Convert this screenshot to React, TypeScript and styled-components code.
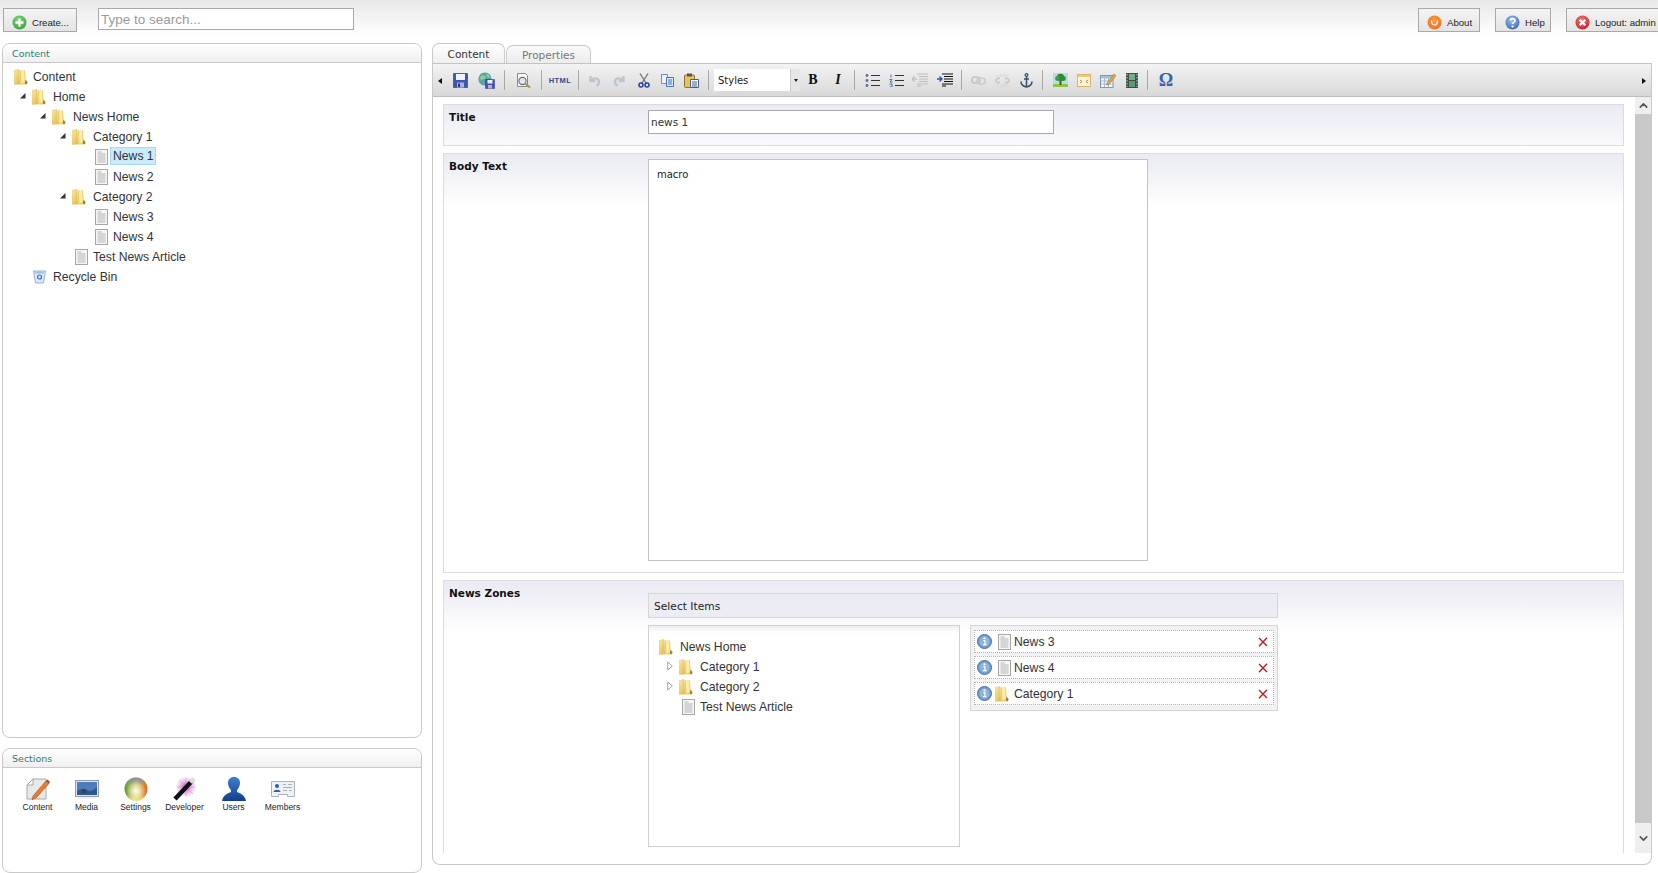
import React from 'react';
import styled, { createGlobalStyle } from 'styled-components';
import { ChevronUp, ChevronDown } from 'lucide-react';

const GlobalStyle = createGlobalStyle`
  html, body {
    margin: 0;
    padding: 0;
    background: #fff;
    overflow: hidden;
  }
  * { box-sizing: border-box; }
`;

const Page = styled.div`
  width: 1658px;
  height: 873px;
  overflow: hidden;
  display: flex;
  flex-direction: column;
  font-family: 'Liberation Sans', Arial, sans-serif;
  color: #333;
`;

const TopBar = styled.div`
  flex: none;
  height: 43px;
  padding: 8px 0 0 3px;
  display: flex;
  align-items: flex-start;
  background: linear-gradient(#e8e8e8, #fff 36px);
`;

const TopButton = styled.button<{ $w: number; $pl: number }>`
  flex: none;
  width: ${(p) => p.$w}px;
  height: 24px;
  padding: 4px 0 0 ${(p) => p.$pl}px;
  display: flex;
  align-items: center;
  gap: 5px;
  border: 1px solid #a9a9a9;
  background: linear-gradient(#f4f4f4, #e4e4e4);
  font-family: 'Liberation Sans', Arial, sans-serif;
  font-size: 9.6px;
  color: #222;
`;

const SearchInput = styled.input`
  flex: none;
  width: 256px;
  height: 22px;
  margin-left: 21px;
  padding: 0 2px;
  border: 1px solid #a9a9a9;
  background: #fff;
  font-family: 'Liberation Sans', Arial, sans-serif;
  font-size: 13.5px;
  &::placeholder { color: #9a9a9a; opacity: 1; }
`;

const TopRight = styled.div`
  margin-left: auto;
  display: flex;
  gap: 15px;
  margin-right: -6px;
`;

const Main = styled.div`
  flex: 1;
  min-height: 0;
  display: flex;
  padding-left: 2px;
`;

const LeftColumn = styled.div`
  flex: none;
  width: 420px;
  display: flex;
  flex-direction: column;
  gap: 10px;
`;

const Panel = styled.div<{ $h: number }>`
  flex: none;
  height: ${(p) => p.$h}px;
  border: 1px solid #c9c9c9;
  border-radius: 8px;
  background: #fff;
  overflow: hidden;
`;

const PanelHead = styled.div`
  height: 19px;
  padding-left: 9px;
  display: flex;
  align-items: center;
  border-bottom: 1px solid #c9c9c9;
  background: linear-gradient(#fff, #efefef);
  font-family: 'DejaVu Sans', sans-serif;
  font-size: 9.5px;
  color: #2f7d78;
`;

const Tree = styled.div<{ $pad: number; $top: number }>`
  padding: ${(p) => p.$top}px 0 0 ${(p) => p.$pad}px;
`;

const TreeRow = styled.div<{ $level: number }>`
  height: 20px;
  padding-left: ${(p) => p.$level * 20}px;
  display: flex;
  align-items: center;
  font-size: 12.2px;
`;

const ArrowSlot = styled.span`
  flex: none;
  width: 12px;
  margin: -3px 8px 0 -20px;
  display: flex;
  align-items: center;
  justify-content: flex-end;
`;

const iconShift = { folder: -2, doc: 1, bin: -1 };

const IconSlot = styled.span<{ $kind: Kind; $flush?: boolean }>`
  flex: none;
  margin-left: ${(p) => (p.$flush ? 0 : iconShift[p.$kind])}px;
  width: ${(p) => 19 - (p.$flush ? 0 : iconShift[p.$kind])}px;
  display: flex;
  align-items: center;
`;

const TreeLabel = styled.span<{ $on?: boolean }>`
  padding: 1px 1px 1px 2px;
  margin-left: -3px;
  margin-top: ${(p) => (p.$on ? -2 : 0)}px;
  border: 1px solid ${(p) => (p.$on ? '#a6d8ef' : 'transparent')};
  background: ${(p) => (p.$on ? '#cbeafa' : 'transparent')};
  line-height: 14px;
`;

const SectionGrid = styled.div`
  display: flex;
  padding: 9px 0 0 10px;
`;

const SectionItem = styled.div`
  width: 49px;
  display: flex;
  flex-direction: column;
  align-items: center;
  gap: 1px;
  font-size: 8.5px;
  color: #222;
`;

const SectionPic = styled.span`
  height: 24px;
  display: flex;
  align-items: center;
`;

const RightColumn = styled.div`
  flex: none;
  width: 1220px;
  margin-left: 10px;
  margin-bottom: 8px;
  display: flex;
  flex-direction: column;
`;

const Tabs = styled.div`
  flex: none;
  height: 20px;
  display: flex;
  align-items: flex-end;
  gap: 1px;
`;

const Tab = styled.div<{ $active?: boolean }>`
  width: ${(p) => (p.$active ? 73 : 85)}px;
  height: ${(p) => (p.$active ? 20 : 18)}px;
  padding-top: 1px;
  display: flex;
  align-items: center;
  justify-content: center;
  border: 1px solid #c9c9c9;
  border-bottom: none;
  border-radius: 7px 7px 0 0;
  background: ${(p) => (p.$active ? 'linear-gradient(#fff, #f0f0f0)' : 'linear-gradient(#fafafa, #ececec)')};
  font-family: 'DejaVu Sans', sans-serif;
  font-size: 10.5px;
  color: ${(p) => (p.$active ? '#333' : '#777')};
`;

const EditorPanel = styled.div`
  flex: 1;
  min-height: 0;
  display: flex;
  flex-direction: column;
  border: 1px solid #c9c9c9;
  border-top: none;
  border-radius: 0 0 8px 8px;
  overflow: hidden;
`;

const Toolbar = styled.div`
  flex: none;
  height: 34px;
  display: flex;
  align-items: center;
  position: relative;
  padding-left: 15px;
  border-top: 1px solid #c4c4c4;
  border-bottom: 1px solid #bdbdbd;
  background: linear-gradient(#f3f3f3, #d8d8d8);
`;

const Handle = styled.span<{ $right?: boolean }>`
  position: absolute;
  top: 14px;
  ${(p) => (p.$right ? 'right: 5px;' : 'left: 5px;')}
  width: 0;
  height: 0;
  border-top: 3px solid transparent;
  border-bottom: 3px solid transparent;
  ${(p) => (p.$right ? 'border-left: 4px solid #111;' : 'border-right: 4px solid #111;')}
`;

const Tool = styled.span<{ $w: number }>`
  flex: none;
  width: ${(p) => p.$w}px;
  height: 24px;
  display: flex;
  align-items: center;
  justify-content: center;
`;

const ToolSep = styled.span`
  flex: none;
  width: 1px;
  height: 20px;
  margin: 0 4px;
  background: #a8a8a8;
`;

const HtmlGlyph = styled.span`
  font-size: 7.5px;
  font-weight: bold;
  letter-spacing: 0.4px;
  color: #2d4f86;
`;

const SerifGlyph = styled.span<{ $italic?: boolean; $size?: number; $color?: string }>`
  font-family: 'Liberation Serif', serif;
  font-weight: bold;
  font-style: ${(p) => (p.$italic ? 'italic' : 'normal')};
  font-size: ${(p) => p.$size ?? 14}px;
  color: ${(p) => p.$color ?? '#111'};
`;

const StyleSelect = styled.div`
  flex: none;
  width: 86px;
  height: 22px;
  margin-left: 1px;
  padding-left: 4px;
  display: flex;
  align-items: center;
  justify-content: space-between;
  background: #fff;
  font-family: 'DejaVu Sans', sans-serif;
  font-size: 10px;
  color: #222;
`;

const SelectButton = styled.span`
  width: 10px;
  height: 22px;
  display: flex;
  align-items: center;
  justify-content: center;
  background: #e6e6e6;
  border-left: 1px solid #ccc;
  &::after {
    content: '';
    border-left: 2.5px solid transparent;
    border-right: 2.5px solid transparent;
    border-top: 3px solid #222;
  }
`;

const EditorBody = styled.div`
  flex: none;
  height: 756px;
  display: flex;
  overflow: hidden;
`;

const Rows = styled.div`
  flex: none;
  width: 1202px;
  padding: 7px 11px 0 10px;
  display: flex;
  flex-direction: column;
  gap: 7px;
`;

const PropertyRow = styled.div<{ $h: number }>`
  flex: none;
  height: ${(p) => p.$h}px;
  display: flex;
  align-items: flex-start;
  padding-top: 5px;
  border: 1px solid #dcdcdc;
  background: linear-gradient(#e9eaf3, #fff) no-repeat;
  background-size: 100% 52px;
`;

const PropertyLabel = styled.div`
  flex: none;
  width: 204px;
  padding-left: 5px;
  font-family: 'DejaVu Sans', sans-serif;
  font-size: 10.5px;
  font-weight: bold;
  color: #111;
  line-height: 14px;
`;

const TitleInput = styled.input`
  width: 406px;
  height: 24px;
  padding: 0 2px;
  border: 1px solid #a9a9b0;
  background: #fff;
  font-family: 'DejaVu Sans', sans-serif;
  font-size: 10.5px;
  color: #333;
`;

const RichText = styled.div`
  width: 500px;
  height: 402px;
  padding: 9px 8px;
  border: 1px solid #c4c4c8;
  background: #fff;
  font-family: 'DejaVu Sans', sans-serif;
  font-size: 10px;
  color: #222;
`;

const Picker = styled.div`
  width: 630px;
  padding-top: 7px;
  display: flex;
  flex-direction: column;
  gap: 7px;
`;

const PickerHead = styled.div`
  height: 25px;
  padding: 1px 0 0 5px;
  display: flex;
  align-items: center;
  border: 1px solid #d6d6d6;
  background: #ecedf4;
  font-family: 'DejaVu Sans', sans-serif;
  font-size: 10.7px;
  color: #222;
`;

const PickerBody = styled.div`
  display: flex;
  align-items: flex-start;
  gap: 10px;
`;

const PickerTree = styled.div`
  flex: none;
  width: 312px;
  height: 222px;
  border: 1px solid #d0d0d0;
  background: linear-gradient(#eceef3, #fff 7px);
`;

const PickedList = styled.div`
  flex: none;
  width: 308px;
  padding: 4px 3px 5px;
  display: flex;
  flex-direction: column;
  gap: 3px;
  border: 1px solid #d6d6d6;
  background: #f2f2f5;
`;

const PickedItem = styled.div`
  height: 23px;
  padding: 0 5px 0 2px;
  display: flex;
  align-items: center;
  border: 1px dotted #b5b5b5;
  background: #fff;
  font-size: 12.2px;
`;

const PickedIcon = styled.span<{ $kind: Kind }>`
  flex: none;
  width: 21px;
  display: flex;
  justify-content: ${(p) => (p.$kind === 'doc' ? 'flex-end' : 'center')};
  padding-right: 2px;
`;

const PickedName = styled.span`
  flex: 1;
  margin-left: 1px;
`;

const ScrollBar = styled.div`
  flex: none;
  width: 16px;
  display: flex;
  flex-direction: column;
  align-items: center;
  background: #efefef;
  color: #555;
`;

const ScrollEnd = styled.div<{ $h: number }>`
  flex: none;
  height: ${(p) => p.$h}px;
  display: flex;
  align-items: center;
  justify-content: center;
`;

const ScrollThumb = styled.div`
  flex: 1;
  width: 100%;
  background: #c8c8c8;
`;

/* drawings */

const Folder = () => (
  <svg width="14" height="16" viewBox="0 0 14 16">
    <defs>
      <linearGradient id="fold" x1="0" x2="1" y1="0" y2="1">
        <stop offset="0" stopColor="#fbeeaa" />
        <stop offset="1" stopColor="#e0b445" />
      </linearGradient>
    </defs>
    <path d="M0 1.500 5 .5 6 15 1 15.500Q0 15.500 0 14.500Z" fill="url(#fold)" stroke="#d9b552" strokeWidth=".4" />
    <path d="M5.500 1.500 11 1.500 11.500 10 13.500 12.500 13 15.500 6 15.500Z" fill="#f0cf6d" />
    <path d="M7 2 10 2 10.500 13 7.500 14Z" fill="#fff4bf" opacity=".8" />
    <path d="M11 11 13.500 13 13 15 11 15Z" fill="#8e8558" />
  </svg>
);

const Doc = () => (
  <svg width="13" height="16" viewBox="0 0 13 16">
    <rect x=".5" y=".5" width="12" height="15" fill="#f6f6f6" stroke="#a6a6a6" />
    <path d="M2.500 3h4M2.500 5h8M2.500 7h8M2.500 9h8M2.500 11h8M2.500 13h8" stroke="#b4b4b4" strokeWidth="1" />
  </svg>
);

const Bin = () => (
  <svg width="13" height="14" viewBox="0 0 13 14">
    <path d="M.5 1h12L10.500 13h-8Z" fill="#dceaf8" stroke="#7fa2c6" strokeWidth=".8" />
    <rect x="2" y="1.500" width="9" height="2" fill="#9fc0e0" />
    <circle cx="6.500" cy="7" r="2" fill="none" stroke="#2f74c0" strokeWidth="1.200" />
  </svg>
);

const OpenArrow = () => (
  <svg width="7" height="7" viewBox="0 0 7 7">
    <path d="M6.500 1v5.500H1Z" fill="#333" />
  </svg>
);

const ClosedArrow = () => (
  <svg width="6" height="10" viewBox="0 0 6 10">
    <path d="M.7 1 5.300 5 .7 9Z" fill="#fff" stroke="#9a9a9a" strokeWidth=".9" />
  </svg>
);

const Ball = ({ id, light, dark, size = 15 }: { id: string; light: string; dark: string; size?: number }) => (
  <>
    <defs>
      <radialGradient id={id} cx=".45" cy=".35" r=".75">
        <stop offset="0" stopColor={light} />
        <stop offset="1" stopColor={dark} />
      </radialGradient>
    </defs>
    <circle cx={size / 2} cy={size / 2} r={size / 2 - 0.5} fill={`url(#${id})`} />
  </>
);

const CreateIcon = () => (
  <svg width="15" height="15" viewBox="0 0 15 15">
    <Ball id="bg" light="#8fdc7c" dark="#2a9a3c" />
    <path d="M7.500 3.500v8M3.500 7.500h8" stroke="#fff" strokeWidth="2.400" />
  </svg>
);

const AboutIcon = () => (
  <svg width="15" height="15" viewBox="0 0 15 15">
    <Ball id="oa" light="#f79a4a" dark="#ee6f1c" />
    <path d="M4.500 5.500c0 6 6 6 6 0" fill="none" stroke="#fff" strokeWidth="1.200" />
  </svg>
);

const HelpIcon = () => (
  <svg width="15" height="15" viewBox="0 0 15 15">
    <Ball id="bh" light="#a9c6ee" dark="#2c5cae" />
    <path d="M5.300 5.400c.3-2.600 4.800-2.400 4.600.3-.1 1.700-2.300 1.600-2.300 3.400" fill="none" stroke="#fff" strokeWidth="1.700" />
    <circle cx="7.600" cy="11.500" r="1.100" fill="#fff" />
  </svg>
);

const LogoutIcon = () => (
  <svg width="15" height="15" viewBox="0 0 15 15">
    <Ball id="rl" light="#f2807f" dark="#c4141c" />
    <path d="M4.700 4.700l5.600 5.600M10.300 4.700l-5.600 5.600" stroke="#fff" strokeWidth="2.200" />
  </svg>
);

const InfoIcon = () => (
  <svg width="15" height="15" viewBox="0 0 15 15">
    <circle cx="7.500" cy="7.500" r="7" fill="#6f9bcc" stroke="#4a74a8" />
    <circle cx="7.500" cy="7.500" r="5" fill="#8fb5de" />
    <circle cx="7.500" cy="4.300" r="1.100" fill="#fff" />
    <path d="M6.300 6.500h1.600v4M5.900 10.700h3.600" fill="none" stroke="#fff" strokeWidth="1.200" />
  </svg>
);

const RemoveIcon = () => (
  <svg width="10" height="10" viewBox="0 0 10 10">
    <path d="M1 1l8 8M9 .8 1 9.200" stroke="#b3202a" strokeWidth="1.400" />
  </svg>
);

const SaveIcon = () => (
  <svg width="15" height="15" viewBox="0 0 15 15">
    <path d="M.5.500h14v14h-14Z" fill="#3f55b0" stroke="#27367f" strokeWidth=".6" />
    <rect x="3" y="1" width="9" height="6" fill="#eef1fb" />
    <rect x="4" y="9.500" width="7" height="5" fill="#a9b4dc" />
    <rect x="5" y="10.500" width="2" height="3.500" fill="#27367f" />
  </svg>
);

const SaveGlobeIcon = () => (
  <svg width="17" height="17" viewBox="0 0 17 17">
    <circle cx="7" cy="7" r="6.600" fill="#5aa3a8" />
    <path d="M2 5q3-3 5-1t-1 3-3 2ZM8 2q4 0 4 4l-3-1Z" fill="#8fcf94" />
    <path d="M7.500 7.500h9v9h-9Z" fill="#3f55b0" stroke="#27367f" strokeWidth=".5" />
    <rect x="9.500" y="8" width="5" height="3.500" fill="#eef1fb" />
    <rect x="10" y="13" width="4" height="3.500" fill="#a9b4dc" />
  </svg>
);

const PreviewIcon = () => (
  <svg width="17" height="17" viewBox="0 0 17 17">
    <path d="M2.500 1.500h8l2 2v11h-10Z" fill="#fafafa" stroke="#8a8a8a" />
    <circle cx="7.500" cy="9" r="3.600" fill="#dbe8f4" stroke="#6a6a6a" strokeWidth="1.100" />
    <path d="M10 11.500l5 4" stroke="#b58a45" strokeWidth="2" />
  </svg>
);

const UndoIcon = ({ flip }: { flip?: boolean }) => (
  <svg width="13" height="13" viewBox="0 0 13 13" transform={flip ? 'scale(-1 1)' : undefined}>
    <path d="M2.500 2v5h5" fill="none" stroke="#bcc5d0" strokeWidth="2.400" />
    <path d="M3 6.500C5 3.500 10.500 3.500 11 7.500 11 9.500 10 11 8.500 12" fill="none" stroke="#bcc5d0" strokeWidth="2.400" />
  </svg>
);

const CutIcon = () => (
  <svg width="12" height="15" viewBox="0 0 12 15">
    <path d="M2 .5 8 10M10 .5 4 10" stroke="#777" strokeWidth="1.400" />
    <circle cx="3" cy="12" r="2" fill="none" stroke="#23409a" strokeWidth="1.500" />
    <circle cx="9" cy="12" r="2" fill="none" stroke="#23409a" strokeWidth="1.500" />
  </svg>
);

const CopyIcon = () => (
  <svg width="13" height="13" viewBox="0 0 13 13">
    <path d="M.5.500h6v9h-6Z" fill="#eef3fb" stroke="#6d8fc4" />
    <path d="M5.500 3.500h7v9h-7Z" fill="#dfe9f8" stroke="#4a72b4" />
    <path d="M7 6h4M7 8h4M7 10h4" stroke="#4a72b4" />
  </svg>
);

const PasteIcon = () => (
  <svg width="15" height="15" viewBox="0 0 15 15">
    <rect x=".5" y="2" width="10" height="12.500" rx="1" fill="#e7c35a" stroke="#8e7430" />
    <rect x="3" y=".5" width="5" height="3" fill="#555" />
    <path d="M6.500 6.500h8v8h-8Z" fill="#f5f7fc" stroke="#4a5f8c" />
    <path d="M8 9h5M8 11h5M8 13h5" stroke="#4a5f8c" />
  </svg>
);

const ListIcon = ({ ordered }: { ordered?: boolean }) => (
  <svg width="15" height="13" viewBox="0 0 15 13">
    <path d="M6 1.500h9M6 6.500h9M6 11.500h9" stroke="#333" strokeWidth="1" />
    {ordered ? (
      <path d="M2 .5v3M.5 5.500h2.500l-2 2.500h2.500M.5 10h2.500v3H.5" fill="none" stroke="#3a5fb0" strokeWidth=".9" />
    ) : (
      <>
        <circle cx="2" cy="1.500" r="1.400" fill="#5a6f96" />
        <circle cx="2" cy="6.500" r="1.400" fill="#5a6f96" />
        <circle cx="2" cy="11.500" r="1.400" fill="#5a6f96" />
      </>
    )}
  </svg>
);

const IndentIcon = ({ off }: { off?: boolean }) => (
  <svg width="16" height="14" viewBox="0 0 16 14">
    <path
      d="M5 1h11M7 3.500h9M7 6h9M7 8.500h9M5 11h11M5 13h4"
      stroke={off ? '#bdbdbd' : '#111'}
      strokeWidth="1.200"
    />
    <path d={off ? 'M5 6H0M2.500 3.500 0 6l2.500 2.500' : 'M0 6h5M2.500 3.500 5 6 2.500 8.500'} fill="none" stroke={off ? '#b8c2d2' : '#2a55b0'} strokeWidth="1.400" />
  </svg>
);

const LinkIcon = () => (
  <svg width="15" height="9" viewBox="0 0 15 9">
    <rect x=".8" y="1" width="8" height="6" rx="3" fill="none" stroke="#c2c2c2" strokeWidth="1.500" />
    <rect x="6" y="2" width="8" height="6" rx="3" fill="none" stroke="#c9c9c9" strokeWidth="1.500" />
  </svg>
);

const UnlinkIcon = () => (
  <svg width="15" height="15" viewBox="0 0 15 15">
    <path d="M5 5.500H3a2 2 0 0 0 0 4h2M10 5.500h2a2 2 0 0 1 0 4h-2" fill="none" stroke="#c6c6c6" strokeWidth="1.400" />
    <path d="M6 .5l.5 3.500M9.500.5 9 4M6 14.500l.5-3.500M9.500 14.500 9 11M13.500 2l-3 2.500M1.500 2l3 2.500M13.500 13l-3-2.500M1.500 13l3-2.500" stroke="#d2d2d2" />
  </svg>
);

const AnchorIcon = () => (
  <svg width="13" height="15" viewBox="0 0 13 15">
    <circle cx="6.500" cy="2" r="1.400" fill="none" stroke="#33506e" strokeWidth="1.200" />
    <path d="M6.500 3.500V14M4 6h5M1 8.500c0 3.500 3 5 5.500 5.500 2.500-.5 5.500-2 5.500-5.500" fill="none" stroke="#33506e" strokeWidth="1.500" />
  </svg>
);

const ImageIcon = () => (
  <svg width="15" height="14" viewBox="0 0 15 14">
    <rect width="15" height="14" fill="#bcd9ea" />
    <rect y="11" width="15" height="3" fill="#8cc63f" />
    <rect x="6.500" y="7" width="2" height="5" fill="#6b4a22" />
    <circle cx="7.500" cy="4.500" r="3.800" fill="#2f8a33" />
    <circle cx="4.500" cy="5.500" r="2.400" fill="#3f9f3a" />
    <circle cx="10.500" cy="5.500" r="2.400" fill="#358f35" />
  </svg>
);

const FlashIcon = () => (
  <svg width="14" height="13" viewBox="0 0 14 13">
    <rect x=".5" y=".5" width="13" height="12" fill="#fbf4dd" stroke="#d7b66a" />
    <rect x="1" y="1" width="12" height="2" fill="#f4c874" />
    <path d="M3 6l2 1.500-2 1.500M11 6 9 7.500 11 9" fill="none" stroke="#dd8a2e" />
  </svg>
);

const TableIcon = () => (
  <svg width="16" height="16" viewBox="0 0 16 16">
    <rect x=".5" y="3.500" width="12.500" height="12" fill="#f3f6fb" stroke="#7f98bd" />
    <rect x="1" y="4" width="11.500" height="2.500" fill="#a8c0e0" />
    <path d="M4.500 4v11M8.500 4v11M1 9h12M1 12h12" stroke="#a8b9d2" />
    <path d="M7 11 14 2l2 1.500L9 12.500 6.500 13Z" fill="#e6a54a" stroke="#98682a" strokeWidth=".5" />
  </svg>
);

const FilmIcon = () => (
  <svg width="12" height="15" viewBox="0 0 12 15">
    <rect width="12" height="15" fill="#3f4f45" />
    <rect x="3" y="1" width="6" height="6" fill="#6fae8a" />
    <rect x="3" y="8" width="6" height="6" fill="#5a9a78" />
    <path d="M1 1v13M11 1v13" stroke="#c8d4cc" strokeWidth="1" strokeDasharray="1.500 1.500" />
  </svg>
);

const SectionContentIcon = () => (
  <svg width="24" height="24" viewBox="0 0 24 24">
    <path d="M1 8 7 2h13v20H1Z" fill="#e9e9e9" stroke="#a8a8a8" />
    <path d="M1 8h6V2Z" fill="#fff" stroke="#a8a8a8" />
    <path d="M7 19 20 4l3 2.500L10 21l-4 1.500Z" fill="#e87f2e" stroke="#a24f16" strokeWidth=".6" />
    <path d="M20 4l3 2.500 1-1.500-2.500-2.500Z" fill="#8a4a4a" />
  </svg>
);

const SectionMediaIcon = () => (
  <svg width="24" height="22" viewBox="0 0 24 22">
    <rect x=".5" y="2.500" width="23" height="16" fill="#dbe4f0" stroke="#8d9db3" />
    <rect x="2" y="4" width="20" height="13" fill="#4f7cbc" />
    <path d="M2 13q6-4 10-1t10-3v8H2Z" fill="#2e568f" />
    <rect x="7" y="11" width="4" height="4" fill="#39424f" />
    <rect x="3" y="19.500" width="18" height="1" fill="#e5e5e5" />
  </svg>
);

const SectionSettingsIcon = () => (
  <svg width="24" height="24" viewBox="0 0 24 24">
    <defs>
      <radialGradient id="sw" cx=".5" cy=".6" r=".42">
        <stop offset="0" stopColor="#fffbe6" />
        <stop offset="1" stopColor="#fffbe6" stopOpacity="0" />
      </radialGradient>
      <linearGradient id="sb" x1="0" x2="1" y1="0" y2="0">
        <stop offset="0" stopColor="#5e9a34" />
        <stop offset=".5" stopColor="#d7cc78" />
        <stop offset="1" stopColor="#e06a1c" />
      </linearGradient>
      <linearGradient id="st" x1="0" x2="0" y1="0" y2="1">
        <stop offset="0" stopColor="#7a8da6" />
        <stop offset=".35" stopColor="#7a8da6" stopOpacity="0" />
        <stop offset=".75" stopColor="#f3e26a" stopOpacity="0" />
        <stop offset="1" stopColor="#f3e26a" />
      </linearGradient>
    </defs>
    <circle cx="12" cy="12" r="11.500" fill="url(#sb)" />
    <circle cx="12" cy="12" r="11.500" fill="url(#st)" />
    <circle cx="12" cy="12" r="11.500" fill="url(#sw)" />
  </svg>
);

const SectionDeveloperIcon = () => (
  <svg width="24" height="24" viewBox="0 0 24 24">
    <defs>
      <radialGradient id="dv">
        <stop offset="0" stopColor="#b03ab0" />
        <stop offset="1" stopColor="#e9b8e9" stopOpacity=".2" />
      </radialGradient>
    </defs>
    <circle cx="13" cy="10" r="10" fill="url(#dv)" />
    <path d="M13 1v18M4 10h18M6 3l14 14M20 3 6 17" stroke="#d88ad8" strokeWidth=".6" />
    <path d="M2 22 19 4" stroke="#111" strokeWidth="4.500" />
    <path d="M17.500 5.500 21 1.500" stroke="#ddd" strokeWidth="4.500" />
  </svg>
);

const SectionUsersIcon = () => (
  <svg width="24" height="24" viewBox="0 0 24 24">
    <defs>
      <linearGradient id="us" x1="0" x2="0" y1="0" y2="1">
        <stop offset="0" stopColor="#3f7fd0" />
        <stop offset="1" stopColor="#123f8a" />
      </linearGradient>
    </defs>
    <path d="M12 0c4 0 6 2.500 6 6 0 3-1.500 5.500-3 7v2c3 1 8 3 9 9H0c1-6 6-8 9-9v-2C7.500 11.500 6 9 6 6c0-3.500 2-6 6-6Z" fill="url(#us)" />
  </svg>
);

const SectionMembersIcon = () => (
  <svg width="24" height="22" viewBox="0 0 24 22">
    <path d="M.5 3.500h23v15h-7v-2h-9v2h-7Z" fill="#eef1f6" stroke="#aab2bf" />
    <circle cx="6" cy="8" r="2" fill="#2d5fb0" />
    <path d="M2.500 14c0-3 7-3 7 0Z" fill="#2d5fb0" />
    <path d="M12 6.500h3M17 6.500h4M12 9.500h9M12 12.500h4M18 12.500h3" stroke="#aab2bf" />
  </svg>
);

type Kind = 'folder' | 'doc' | 'bin';
type Node = { name: string; level: number; kind: Kind; open?: boolean; closed?: boolean; on?: boolean; flush?: boolean };

const contentTree: Node[] = [
  { name: 'Content', level: 0, kind: 'folder', flush: true },
  { name: 'Home', level: 1, kind: 'folder', open: true },
  { name: 'News Home', level: 2, kind: 'folder', open: true },
  { name: 'Category 1', level: 3, kind: 'folder', open: true },
  { name: 'News 1', level: 4, kind: 'doc', on: true },
  { name: 'News 2', level: 4, kind: 'doc' },
  { name: 'Category 2', level: 3, kind: 'folder', open: true },
  { name: 'News 3', level: 4, kind: 'doc' },
  { name: 'News 4', level: 4, kind: 'doc' },
  { name: 'Test News Article', level: 3, kind: 'doc' },
  { name: 'Recycle Bin', level: 1, kind: 'bin' },
];

const pickerTree: Node[] = [
  { name: 'News Home', level: 0, kind: 'folder' },
  { name: 'Category 1', level: 1, kind: 'folder', closed: true },
  { name: 'Category 2', level: 1, kind: 'folder', closed: true },
  { name: 'Test News Article', level: 1, kind: 'doc' },
];

const kindIcon = (kind: Kind) => {
  if (kind === 'folder') return <Folder />;
  if (kind === 'doc') return <Doc />;
  return <Bin />;
};

const sections = [
  { name: 'Content', icon: <SectionContentIcon /> },
  { name: 'Media', icon: <SectionMediaIcon /> },
  { name: 'Settings', icon: <SectionSettingsIcon /> },
  { name: 'Developer', icon: <SectionDeveloperIcon /> },
  { name: 'Users', icon: <SectionUsersIcon /> },
  { name: 'Members', icon: <SectionMembersIcon /> },
];

const tools: ({ w: number; icon: React.ReactNode } | 'sep' | 'select')[] = [
  { w: 24, icon: <SaveIcon /> },
  { w: 28, icon: <SaveGlobeIcon /> },
  'sep',
  { w: 28, icon: <PreviewIcon /> },
  'sep',
  { w: 28, icon: <HtmlGlyph>HTML</HtmlGlyph> },
  'sep',
  { w: 22, icon: <UndoIcon /> },
  { w: 28, icon: <UndoIcon flip /> },
  { w: 22, icon: <CutIcon /> },
  { w: 24, icon: <CopyIcon /> },
  { w: 25, icon: <PasteIcon /> },
  'sep',
  'select',
  { w: 26, icon: <SerifGlyph>B</SerifGlyph> },
  { w: 24, icon: <SerifGlyph $italic>I</SerifGlyph> },
  'sep',
  { w: 26, icon: <ListIcon /> },
  { w: 22, icon: <ListIcon ordered /> },
  { w: 26, icon: <IndentIcon off /> },
  { w: 24, icon: <IndentIcon /> },
  'sep',
  { w: 24, icon: <LinkIcon /> },
  { w: 24, icon: <UnlinkIcon /> },
  { w: 24, icon: <AnchorIcon /> },
  'sep',
  { w: 26, icon: <ImageIcon /> },
  { w: 22, icon: <FlashIcon /> },
  { w: 26, icon: <TableIcon /> },
  { w: 22, icon: <FilmIcon /> },
  'sep',
  { w: 28, icon: <SerifGlyph $size={18} $color="#3a62ad">Ω</SerifGlyph> },
];

const picked: { name: string; kind: Kind }[] = [
  { name: 'News 3', kind: 'doc' },
  { name: 'News 4', kind: 'doc' },
  { name: 'Category 1', kind: 'folder' },
];

const TreeView = ({ nodes, pad, top }: { nodes: Node[]; pad: number; top: number }) => (
  <Tree $pad={pad} $top={top}>
    {nodes.map((n) => (
      <TreeRow key={n.name} $level={n.level}>
        {n.level > 0 && (
          <ArrowSlot>
            {n.open && <OpenArrow />}
            {n.closed && <ClosedArrow />}
          </ArrowSlot>
        )}
        <IconSlot $kind={n.kind} $flush={n.flush}>
          {kindIcon(n.kind)}
        </IconSlot>
        <TreeLabel $on={n.on}>{n.name}</TreeLabel>
      </TreeRow>
    ))}
  </Tree>
);

const App: React.FC = () => {
  return (
    <Page>
      <GlobalStyle />
      <TopBar>
        <TopButton $w={74} $pl={8}>
          <CreateIcon />
          Create...
        </TopButton>
        <SearchInput placeholder="Type to search..." />
        <TopRight>
          <TopButton $w={62} $pl={8}>
            <AboutIcon />
            About
          </TopButton>
          <TopButton $w={56} $pl={9}>
            <HelpIcon />
            Help
          </TopButton>
          <TopButton $w={98} $pl={8}>
            <LogoutIcon />
            Logout: admin
          </TopButton>
        </TopRight>
      </TopBar>
      <Main>
        <LeftColumn>
          <Panel $h={695}>
            <PanelHead>Content</PanelHead>
            <TreeView nodes={contentTree} pad={11} top={4} />
          </Panel>
          <Panel $h={125}>
            <PanelHead>Sections</PanelHead>
            <SectionGrid>
              {sections.map((s) => (
                <SectionItem key={s.name}>
                  <SectionPic>{s.icon}</SectionPic>
                  <span>{s.name}</span>
                </SectionItem>
              ))}
            </SectionGrid>
          </Panel>
        </LeftColumn>
        <RightColumn>
          <Tabs>
            <Tab $active>Content</Tab>
            <Tab>Properties</Tab>
          </Tabs>
          <EditorPanel>
            <Toolbar>
              <Handle />
              {tools.map((t, i) => {
                if (t === 'sep') return <ToolSep key={i} />;
                if (t === 'select')
                  return (
                    <StyleSelect key={i}>
                      Styles
                      <SelectButton />
                    </StyleSelect>
                  );
                return (
                  <Tool key={i} $w={t.w}>
                    {t.icon}
                  </Tool>
                );
              })}
              <Handle $right />
            </Toolbar>
            <EditorBody>
              <Rows>
                <PropertyRow $h={42}>
                  <PropertyLabel>Title</PropertyLabel>
                  <TitleInput defaultValue="news 1" />
                </PropertyRow>
                <PropertyRow $h={420}>
                  <PropertyLabel>Body Text</PropertyLabel>
                  <RichText>macro</RichText>
                </PropertyRow>
                <PropertyRow $h={300}>
                  <PropertyLabel>News Zones</PropertyLabel>
                  <Picker>
                    <PickerHead>Select Items</PickerHead>
                    <PickerBody>
                      <PickerTree>
                        <TreeView nodes={pickerTree} pad={12} top={11} />
                      </PickerTree>
                      <PickedList>
                        {picked.map((p) => (
                          <PickedItem key={p.name}>
                            <InfoIcon />
                            <PickedIcon $kind={p.kind}>{kindIcon(p.kind)}</PickedIcon>
                            <PickedName>{p.name}</PickedName>
                            <RemoveIcon />
                          </PickedItem>
                        ))}
                      </PickedList>
                    </PickerBody>
                  </Picker>
                </PropertyRow>
              </Rows>
              <ScrollBar>
                <ScrollEnd $h={17}>
                  <ChevronUp size={13} strokeWidth={3} />
                </ScrollEnd>
                <ScrollThumb />
                <ScrollEnd $h={30}>
                  <ChevronDown size={13} strokeWidth={3} />
                </ScrollEnd>
              </ScrollBar>
            </EditorBody>
          </EditorPanel>
        </RightColumn>
      </Main>
    </Page>
  );
};

export default App;
